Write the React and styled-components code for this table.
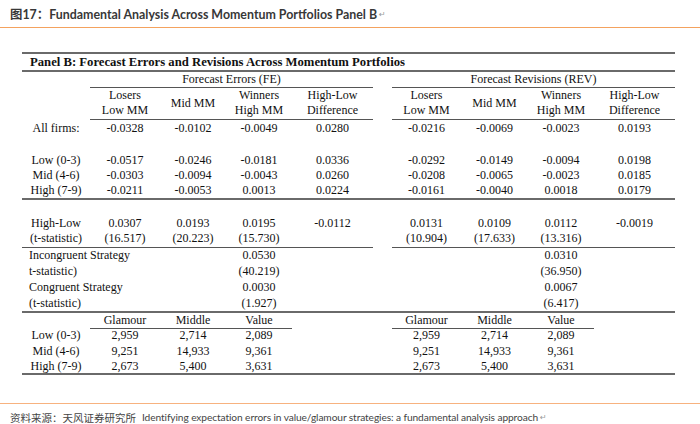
import React from 'react';
import styled, { createGlobalStyle } from 'styled-components';

const GlobalStyle = createGlobalStyle`
  html, body {
    margin: 0;
    padding: 0;
    background: #fff;
  }
`;

const Page = styled.div`
  width: 700px;
  height: 424px;
  display: flex;
  flex-direction: column;
  background: #fff;
  overflow: hidden;
`;

const Caption = styled.div`
  height: 28px;
  box-sizing: border-box;
  padding: 1px 10px 0;
  display: flex;
  align-items: center;
  border-bottom: 1.5px solid #f4a25e;
  font-family: 'Lato', 'Noto Sans CJK SC', sans-serif;
  font-weight: 700;
  font-size: 12.4px;
  color: #383838;
`;

const ReturnMark = styled.span`
  font-family: 'DejaVu Sans', sans-serif;
  font-weight: 400;
  font-size: 8px;
  color: #999;
  margin-left: 2px;
`;

const Table = styled.div`
  margin: 24px 0 0 22px;
  width: 653px;
  font-family: 'Liberation Serif', 'Times New Roman', serif;
  font-size: 12px;
  color: #111;
  border-top: 2px solid #6a6a6a;
  border-bottom: 2px solid #6a6a6a;
`;

const Row = styled.div`
  display: grid;
  grid-template-columns: 68px 70px 66px 66px 81px 19px 69px 67px 66px 81px;
  height: ${(p) => p.$h}px;
  box-sizing: border-box;
  border-bottom: ${(p) => (p.$rule ? '2px solid #6a6a6a' : 'none')};
`;

const Cell = styled.div`
  grid-column: span ${(p) => p.$span || 1};
  display: flex;
  flex-direction: column;
  justify-content: center;
  align-items: ${(p) => (p.$left ? 'flex-start' : 'center')};
  padding-left: ${(p) => (p.$left ? '7px' : '0')};
  box-sizing: border-box;
  line-height: 15px;
  border-bottom: ${(p) => (p.$rule ? '1.5px solid #555' : 'none')};
  white-space: nowrap;
`;

const PanelTitle = styled(Cell)`
  font-weight: 700;
  font-size: 12.7px;
  padding-left: 8px;
`;

const Footer = styled.div`
  margin-top: auto;
  height: 21px;
  box-sizing: border-box;
  border-top: 1.5px solid #f7b27f;
  padding: 6px 10px 0;
  display: flex;
  align-items: center;
  font-size: 10.5px;
  color: #444;
`;

const SourceLabel = styled.span`
  font-family: 'Noto Sans CJK SC', sans-serif;
  margin-right: 6px;
`;

const SourceText = styled.span`
  font-family: 'Lato', sans-serif;
  font-size: 10.2px;
  letter-spacing: -0.1px;
`;

const heads = [['Losers', 'Low MM'], ['Mid MM'], ['Winners', 'High MM'], ['High-Low', 'Difference']];

const allFirms = ['All firms:', ['-0.0328', '-0.0102', '-0.0049', '0.0280'], ['-0.0216', '-0.0069', '-0.0023', '0.0193']];

const tercile = [
  ['Low (0-3)', ['-0.0517', '-0.0246', '-0.0181', '0.0336'], ['-0.0292', '-0.0149', '-0.0094', '0.0198']],
  ['Mid (4-6)', ['-0.0303', '-0.0094', '-0.0043', '0.0260'], ['-0.0208', '-0.0065', '-0.0023', '0.0185']],
  ['High (7-9)', ['-0.0211', '-0.0053', '0.0013', '0.0224'], ['-0.0161', '-0.0040', '0.0018', '0.0179']],
];

const strategy = [
  ['Incongruent Strategy', '0.0530', '0.0310', 16.5],
  ['t-statistic)', '(40.219)', '(36.950)', 15.5],
  ['Congruent Strategy', '0.0030', '0.0067', 15.5],
  ['(t-statistic)', '(1.927)', '(6.417)', 18],
];

const counts = [
  ['Low (0-3)', ['2,959', '2,714', '2,089'], 16],
  ['Mid (4-6)', ['9,251', '14,933', '9,361'], 15.5],
  ['High (7-9)', ['2,673', '5,400', '3,631'], 14],
];

function DataRow({ label, fe, rev, h, rule, underline }) {
  return (
    <Row $h={h} $rule={rule}>
      <Cell $rule={underline}>{label}</Cell>
      {fe.map((v, i) => <Cell key={'f' + i} $rule={underline}>{v}</Cell>)}
      <Cell />
      {rev.map((v, i) => <Cell key={'r' + i} $rule={underline}>{v}</Cell>)}
    </Row>
  );
}

export default function App() {
  return (
    <Page>
      <GlobalStyle />
      <Caption>
        图17：Fundamental Analysis Across Momentum Portfolios Panel B<ReturnMark>↵</ReturnMark>
      </Caption>
      <Table>
        <Row $h={18} $rule>
          <PanelTitle $span={10} $left>
            Panel B: Forecast Errors and Revisions Across Momentum Portfolios
          </PanelTitle>
        </Row>
        <Row $h={16}>
          <Cell />
          <Cell $span={4} $rule>Forecast Errors (FE)</Cell>
          <Cell />
          <Cell $span={4} $rule>Forecast Revisions (REV)</Cell>
        </Row>
        <Row $h={31.5}>
          <Cell />
          {heads.map((h, i) => (
            <Cell key={'a' + i} $rule>{h.map((t) => <span key={t}>{t}</span>)}</Cell>
          ))}
          <Cell />
          {heads.map((h, i) => (
            <Cell key={'b' + i} $rule>{h.map((t) => <span key={t}>{t}</span>)}</Cell>
          ))}
        </Row>
        <DataRow label={allFirms[0]} fe={allFirms[1]} rev={allFirms[2]} h={18} />
        <Row $h={15} />
        {tercile.map(([l, fe, rev], i) => (
          <DataRow key={l} label={l} fe={fe} rev={rev} h={i === 2 ? 17 : 15} rule={i === 2} />
        ))}
        <Row $h={15.5} />
        <DataRow
          label="High-Low"
          fe={['0.0307', '0.0193', '0.0195', '-0.0112']}
          rev={['0.0131', '0.0109', '0.0112', '-0.0019']}
          h={16}
        />
        <DataRow
          label="(t-statistic)"
          fe={['(16.517)', '(20.223)', '(15.730)', '']}
          rev={['(10.904)', '(17.633)', '(13.316)', '']}
          h={16.5}
          underline
        />
        {strategy.map(([l, fe, rev, h], i) => (
          <Row key={l} $h={h} $rule={i === 3}>
            <Cell $span={3} $left>{l}</Cell>
            <Cell>{fe}</Cell>
            <Cell $span={4} />
            <Cell>{rev}</Cell>
            <Cell />
          </Row>
        ))}
        <Row $h={14.5}>
          <Cell />
          {['Glamour', 'Middle', 'Value'].map((t) => <Cell key={t} $rule>{t}</Cell>)}
          <Cell $span={2} />
          {['Glamour', 'Middle', 'Value'].map((t) => <Cell key={'r' + t} $rule>{t}</Cell>)}
          <Cell />
        </Row>
        {counts.map(([l, v, h]) => (
          <Row key={l} $h={h}>
            <Cell>{l}</Cell>
            {v.map((x, j) => <Cell key={j}>{x}</Cell>)}
            <Cell $span={2} />
            {v.map((x, j) => <Cell key={'r' + j}>{x}</Cell>)}
            <Cell />
          </Row>
        ))}
      </Table>
      <Footer>
        <SourceLabel>资料来源：天风证券研究所</SourceLabel>
        <SourceText>Identifying expectation errors in value/glamour strategies: a fundamental analysis approach</SourceText>
        <ReturnMark>↵</ReturnMark>
      </Footer>
    </Page>
  );
}
